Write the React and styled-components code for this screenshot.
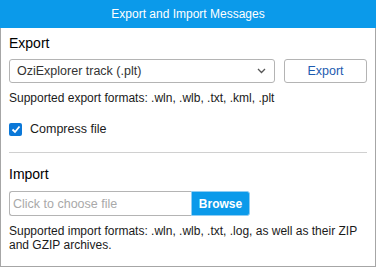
import React from "react";
import styled, { createGlobalStyle } from "styled-components";

const Global = createGlobalStyle`
  html, body { margin: 0; padding: 0; background: #fff; }
  body { font-family: "Liberation Sans", Arial, sans-serif; }
`;

const Dialog = styled.div`
  width: 376px;
  height: 267px;
  box-sizing: border-box;
  border: 1px solid #a6a6a6;
  border-top: none;
  background: #fff;
  display: flex;
  flex-direction: column;
`;

const Header = styled.div`
  height: 28px;
  margin: 0 -1px;
  background: #0b9aea;
  color: #fff;
  font-size: 12px;
  display: flex;
  align-items: center;
  justify-content: center;
`;

const Body = styled.div`
  padding: 8px 8px 0 8px;
  display: flex;
  flex-direction: column;
`;

const SectionTitle = styled.div`
  font-size: 14px;
  line-height: 15px;
  color: #000;
  margin-top: ${(p) => p.$top || 0}px;
`;

const Row = styled.div`
  display: flex;
  align-items: center;
  gap: ${(p) => p.$gap || 0}px;
  margin-top: ${(p) => p.$top || 0}px;
`;

const SelectBox = styled.div`
  width: 266px;
  height: 24px;
  box-sizing: border-box;
  border: 1px solid #b4b4b4;
  border-radius: 3px;
  display: flex;
  align-items: center;
  justify-content: space-between;
  padding: 0 8px 0 7px;
  font-size: 12.5px;
  color: #333;
`;

const OutlineButton = styled.button`
  flex: 1;
  height: 24px;
  box-sizing: border-box;
  border: 1px solid #b4b4b4;
  border-radius: 3px;
  background: #fff;
  color: #1d5bb0;
  font-family: inherit;
  font-size: 12.5px;
  padding: 0;
`;

const Note = styled.div`
  font-size: 12px;
  line-height: 14px;
  color: #1a1a1a;
  margin-top: ${(p) => p.$top || 0}px;
`;

const Check = styled.span`
  width: 13px;
  height: 13px;
  border-radius: 2px;
  background: #0b78d8;
  display: inline-flex;
  align-items: center;
  justify-content: center;
`;

const CheckLabel = styled.span`
  font-size: 12.5px;
  color: #1a1a1a;
`;

const Divider = styled.hr`
  border: none;
  border-top: 1px solid #d0d0d0;
  margin: 0;
  margin-top: ${(p) => p.$top || 0}px;
`;

const FileField = styled.div`
  width: 182px;
  height: 25px;
  box-sizing: border-box;
  border: 1px solid #b4b4b4;
  border-right: none;
  border-radius: 3px 0 0 3px;
  display: flex;
  align-items: center;
  padding-left: 3px;
  font-size: 12.5px;
  color: #a9a9a9;
`;

const BrowseButton = styled.button`
  width: 59px;
  height: 25px;
  box-sizing: border-box;
  border: 1px solid #8fcdf3;
  border-radius: 0 3px 3px 0;
  background: #0b9aea;
  color: #fff;
  font-family: inherit;
  font-weight: 700;
  font-size: 12px;
  padding: 0;
`;

export default function App() {
  return (
    <>
      <Global />
      <Dialog>
        <Header>Export and Import Messages</Header>
        <Body>
          <SectionTitle>Export</SectionTitle>
          <Row $top={8} $gap={9}>
            <SelectBox>
              <span>OziExplorer track (.plt)</span>
              <svg width="9" height="6" viewBox="0 0 9 6">
                <path d="M1 1 L4.5 4.5 L8 1" fill="none" stroke="#555" strokeWidth="1.3" />
              </svg>
            </SelectBox>
            <OutlineButton>Export</OutlineButton>
          </Row>
          <Note $top={8}>Supported export formats: .wln, .wlb, .txt, .kml, .plt</Note>
          <Row $top={17} $gap={8}>
            <Check>
              <svg width="10" height="9" viewBox="0 0 10 9">
                <path d="M1.5 4.5 L4 7 L8.5 1.5" fill="none" stroke="#fff" strokeWidth="1.8" />
              </svg>
            </Check>
            <CheckLabel>Compress file</CheckLabel>
          </Row>
          <Divider $top={16} />
          <SectionTitle $top={14}>Import</SectionTitle>
          <Row $top={9}>
            <FileField>Click to choose file</FileField>
            <BrowseButton>Browse</BrowseButton>
          </Row>
          <Note $top={8}>
            Supported import formats: .wln, .wlb, .txt, .log, as well as their ZIP
            and GZIP archives.
          </Note>
        </Body>
      </Dialog>
    </>
  );
}
